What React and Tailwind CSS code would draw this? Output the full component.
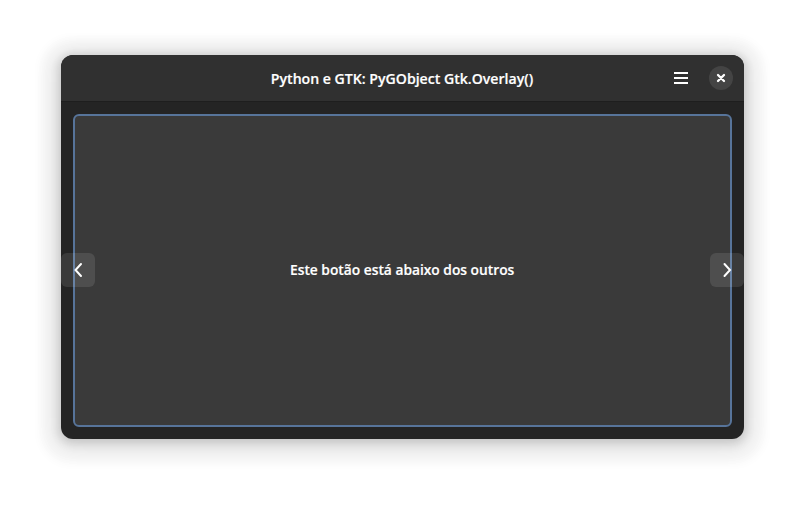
function OverlayButton({ label, className, d }) {
  return (
    <button
      aria-label={label}
      className={`absolute top-[151px] flex h-[34px] w-[34px] items-center justify-center rounded-[6px] bg-white/10 text-white ${className}`}
    >
      <svg width="16" height="16" viewBox="0 0 16 16" fill="none" stroke="currentColor" strokeWidth="2" strokeLinecap="round">
        <path d={d} />
      </svg>
    </button>
  );
}

export default function App() {
  return (
    <div className="h-[506px] w-[805px] overflow-hidden bg-white pt-[55px] pl-[61px] font-['Open_Sans','Noto_Sans',sans-serif] text-[15px] font-semibold text-white [-webkit-text-stroke:0.2px_white]">
      <div className="flex h-[384px] w-[683px] flex-col overflow-hidden rounded-[12px] bg-[#242424] shadow-[0_2px_8px_2px_rgba(0,0,0,0.13),0_3px_18px_8px_rgba(0,0,0,0.09),0_4px_10px_21px_rgba(0,0,0,0.03)]">
        <header className="grid h-[46px] shrink-0 grid-cols-[1fr_auto_1fr] items-center bg-[#303030]">
          <span />
          <h1 className="flex w-[262px] origin-center -translate-x-px scale-x-[0.94] justify-center whitespace-nowrap leading-5">
            Python e GTK: PyGObject Gtk.Overlay()
          </h1>
          <div className="flex items-center justify-end gap-5 pr-[11px]">
            <button aria-label="Menu">
              <svg width="16" height="16" viewBox="0 0 16 16" fill="currentColor">
                <path d="M1 2h14v2H1zM1 7h14v2H1zM1 12h14v2H1z" />
              </svg>
            </button>
            <button aria-label="Fechar" className="flex h-6 w-6 items-center justify-center rounded-full bg-[#444444]">
              <svg width="16" height="16" viewBox="0 0 16 16" fill="none" stroke="currentColor" strokeWidth="2.300" strokeLinecap="round">
                <path d="M5 5l6 6M11 5l-6 6" />
              </svg>
            </button>
          </div>
        </header>
        <main className="relative flex-1 border-t border-[#1e1e1e] px-3 pt-3 pb-3">
          <button className="flex h-[313px] w-[659px] items-center justify-center rounded-[6px] border-2 border-[#57749a] bg-[#3a3a3a] pb-[2px] whitespace-nowrap">
            <span className="origin-center scale-x-[0.918]">Este botão está abaixo dos outros</span>
          </button>
          <OverlayButton label="Anterior" className="left-0" d="M11 2L5.500 8l5.500 6" />
          <OverlayButton label="Próximo" className="right-0" d="M5.500 2L11 8l-5.500 6" />
        </main>
      </div>
    </div>
  );
}
